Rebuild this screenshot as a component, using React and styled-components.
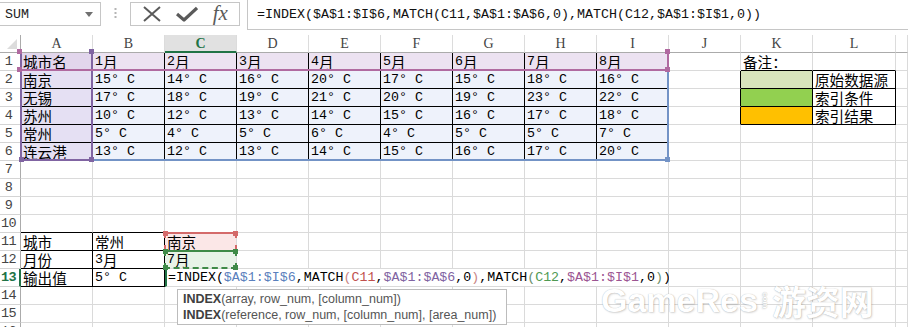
import React from 'react';
import styled, { createGlobalStyle, css } from 'styled-components';

const GlobalStyle = createGlobalStyle`
  html, body { margin: 0; padding: 0; background: #fff; }
  body {
    width: 908px;
    height: 327px;
    overflow: hidden;
    font-family: "Liberation Mono", "Noto Sans CJK SC", monospace;
  }
`;

const HEAD_W = 21;
const COL_W = 72;
const ROW_H = 18;
const LETTERS = ['A', 'B', 'C', 'D', 'E', 'F', 'G', 'H', 'I', 'J', 'K', 'L', ''];
const GRID = '#dadada';
const GREEN = '#217346';

const REF = {
  blue: '#5a80bd',
  red: '#c0504d',
  purple: '#8064a2',
  green: '#4f9a52',
  mauve: '#9c5592',
  paren1: '#c98585',
  paren2: '#6b8f6b',
};

// ---- data ----
const temps = {
  2: [15, 14, 16, 20, 17, 15, 18, 16],
  3: [17, 18, 19, 21, 20, 19, 23, 22],
  4: [10, 12, 13, 14, 15, 16, 17, 18],
  5: [5, 4, 5, 6, 4, 5, 5, 7],
  6: [13, 12, 13, 14, 15, 16, 17, 20],
};
const cities = { 2: '南京', 3: '无锡', 4: '苏州', 5: '常州', 6: '连云港' };

const content = {};
const put = (r, c, v) => { content[`${r}:${c}`] = v; };
put(1, 0, '城市名');
for (let m = 1; m <= 8; m++) put(1, m, `${m}月`);
put(1, 10, '备注：');
Object.keys(temps).forEach((r) => {
  put(r, 0, cities[r]);
  temps[r].forEach((t, i) => put(r, i + 1, `${t}° C`));
});
put(2, 11, '原始数据源');
put(3, 11, '索引条件');
put(4, 11, '索引结果');
put(11, 0, '城市'); put(11, 1, '常州'); put(11, 2, '南京');
put(12, 0, '月份'); put(12, 1, '3月'); put(12, 2, '7月');
put(13, 0, '输出值'); put(13, 1, '5° C');

const boxed = [
  { r1: 1, r2: 6, c1: 0, c2: 8 },
  { r1: 11, r2: 13, c1: 0, c2: 1 },
  { r1: 2, r2: 4, c1: 10, c2: 11 },
];
const inBox = (r, c) => boxed.some((b) => r >= b.r1 && r <= b.r2 && c >= b.c1 && c <= b.c2);

const fillOf = (r, c) => {
  if (r === 1 && c === 0) return '#e2d6ec';
  if (r === 1 && c <= 8) return '#ece2f1';
  if (r >= 2 && r <= 6 && c === 0) return '#e5e0f3';
  if (r >= 2 && r <= 6 && c <= 8) return '#eef2fb';
  if (c === 10 && r === 2) return '#d8e4bc';
  if (c === 10 && r === 3) return '#92d050';
  if (c === 10 && r === 4) return '#ffc000';
  if (r === 11 && c === 2) return '#fbe7e7';
  if (r === 12 && c === 2) return '#e8f3e8';
  return '#fff';
};

const formulaParts = [
  ['=INDEX(', null], ['$A$1:$I$6', REF.blue], [',MATCH', null], ['(', REF.paren1],
  ['C11', REF.red], [',', null], ['$A$1:$A$6', REF.purple], [',0', null], [')', REF.paren1],
  [',MATCH', null], ['(', REF.paren2], ['C12', REF.green], [',', null],
  ['$A$1:$I$1', REF.mauve], [',0', null], [')', REF.paren2], [')', null],
];
const formulaText = formulaParts.map((p) => p[0]).join('');

// ---- top bar ----
const Page = styled.div`
  position: relative;
  width: 908px;
  height: 327px;
  overflow: hidden;
  background: #fff;
`;

const TopBar = styled.div`
  display: flex;
  align-items: flex-start;
  height: 35px;
`;

const NameBox = styled.div`
  box-sizing: border-box;
  margin-top: 2px;
  width: 101px;
  height: 24px;
  border: 1px solid #c6c6c6;
  border-left: none;
  display: flex;
  align-items: center;
  justify-content: space-between;
  padding: 0 7px 0 5px;
  font-family: "Liberation Mono", monospace;
  font-size: 13.3px;
  color: #222;
`;

const Grip = styled.div`
  width: 29px;
  height: 26px;
  display: flex;
  align-items: center;
  justify-content: center;
`;

const ButtonGroup = styled.div`
  box-sizing: border-box;
  margin-top: 2px;
  width: 110px;
  height: 24px;
  border: 1px solid #c6c6c6;
  display: flex;
  align-items: center;
  justify-content: space-around;
  padding: 0 4px;
`;

const Fx = styled.span`
  font-family: "Liberation Serif", serif;
  font-style: italic;
  font-size: 21px;
  color: #5a5a5a;
  line-height: 1;
  margin-top: -2px;
`;

const FormulaBox = styled.div`
  box-sizing: border-box;
  margin-left: 7px;
  flex: 1;
  height: 30px;
  border-left: 1px solid #c6c6c6;
  border-bottom: 1px solid #c6c6c6;
  padding: 6px 0 0 9px;
  font-family: "Liberation Mono", monospace;
  font-size: 13.33px;
  line-height: 18px;
  color: #111;
  white-space: nowrap;
`;

// ---- sheet ----
const Sheet = styled.div`
  position: relative;
  display: grid;
  grid-template-columns: ${HEAD_W}px repeat(11, ${COL_W}px) 83px 1fr;
  grid-auto-rows: ${ROW_H}px;
`;

const Corner = styled.div`
  box-sizing: border-box;
  border-right: 1px solid #ababab;
  border-bottom: 1px solid #ababab;
  display: flex;
  align-items: flex-end;
  justify-content: flex-end;
  padding: 0 3px 3px 0;
`;

const ColHead = styled.div`
  box-sizing: border-box;
  border-right: 1px solid #dcdcdc;
  border-bottom: ${(p) => (p.$on ? `2px solid ${GREEN}` : '1px solid #ababab')};
  background: ${(p) => (p.$on ? '#e1e1e1' : '#fff')};
  color: ${(p) => (p.$on ? GREEN : '#444')};
  font-weight: ${(p) => (p.$on ? 'bold' : 'normal')};
  font-family: "Liberation Serif", serif;
  font-size: 14px;
  line-height: 17px;
  text-align: center;
`;

const RowHead = styled.div`
  box-sizing: border-box;
  border-right: ${(p) => (p.$on ? `2px solid ${GREEN}` : '1px solid #ababab')};
  border-bottom: 1px solid #d4d4d4;
  color: ${(p) => (p.$on ? GREEN : '#444')};
  font-weight: ${(p) => (p.$on ? 'bold' : 'normal')};
  font-family: "Liberation Mono", monospace;
  font-size: 13.5px;
  line-height: 18px;
  text-align: center;
  padding-right: ${(p) => (p.$on ? 2 : 3)}px;
  letter-spacing: -0.5px;
`;

const Cell = styled.div`
  box-sizing: border-box;
  display: flex;
  align-items: center;
  border-right: 1px solid ${(p) => p.$right};
  border-bottom: 1px solid ${(p) => p.$bottom};
  background: ${(p) => p.$bg};
  padding: 1px 0 0 2px;
  font-family: "Liberation Mono", "Noto Sans CJK SC", monospace;
  font-size: 13.3px;
  line-height: 16px;
  color: #000;
  white-space: pre;
  ${(p) => p.$span && css`grid-column: span ${p.$span};`}
  ${(p) => p.$active && css`
    border-left: 2px solid ${GREEN};
    padding-left: 1px;
  `}
`;

const Han = styled.span`
  font-family: "Noto Sans CJK SC", sans-serif;
  font-size: 14.6px;
  line-height: 16px;
`;

const Ref = styled.span`
  color: ${(p) => p.$color || '#000'};
`;

// range highlight drawn over the grid
const RangeBox = styled.div`
  position: absolute;
  box-sizing: border-box;
  pointer-events: none;
  ${(p) => p.$sides.includes('t') && css`border-top: 2px solid ${p.$color};`}
  ${(p) => p.$sides.includes('r') && css`border-right: 2px ${p.$dash ? 'dashed' : 'solid'} ${p.$color};`}
  ${(p) => p.$sides.includes('b') && css`border-bottom: 2px ${p.$dash ? 'dashed' : 'solid'} ${p.$color};`}
  ${(p) => p.$sides.includes('l') && css`border-left: 2px ${p.$dash ? 'dashed' : 'solid'} ${p.$color};`}
`;

const Handle = styled.span`
  position: absolute;
  width: 5px;
  height: 5px;
  background: ${(p) => p.$color};
  ${(p) => (p.$at.includes('t') ? 'top: -3px;' : 'bottom: -3px;')}
  ${(p) => (p.$at.includes('l') ? 'left: -3px;' : 'right: -3px;')}
`;

const Tooltip = styled.div`
  position: absolute;
  left: 177px;
  top: 289px;
  box-sizing: border-box;
  width: 330px;
  height: 36px;
  background: #fff;
  border: 1px solid #bcbcbc;
  padding: 2px 0 0 5px;
  font-family: "Liberation Sans", Arial, sans-serif;
  font-size: 12.5px;
  line-height: 15.5px;
  color: #555;
  b { color: #404040; }
`;

const Watermark = styled.div`
  position: absolute;
  left: 601px;
  top: 276px;
  display: flex;
  align-items: center;
  gap: 3px;
  font-family: "Liberation Sans", Arial, "Noto Sans CJK SC", sans-serif;
  font-weight: bold;
  font-size: 34px;
  color: #fff;
  text-shadow: 0 0 1px rgba(0, 0, 0, 0.3), 1px 1px 2px rgba(0, 0, 0, 0.15);
  pointer-events: none;
`;

const Com = styled.span`
  writing-mode: vertical-rl;
  font-size: 8px;
  line-height: 1;
`;

// ---- helpers ----
const HAN_RE = /([\u3000-\u303f\u4e00-\u9fff\uff00-\uffef]+)/;
const withHan = (text) =>
  text.split(HAN_RE).filter(Boolean).map((part, i) =>
    HAN_RE.test(part) ? <Han key={i}>{part}</Han> : <span key={i}>{part}</span>
  );

const boxStyle = (r1, r2, c1, c2) => ({
  left: HEAD_W + c1 * COL_W - 1,
  top: ROW_H + (r1 - 1) * ROW_H - 1,
  width: (c2 - c1 + 1) * COL_W + 1,
  height: (r2 - r1 + 1) * ROW_H + 1,
});

const ranges = [
  { key: 'all', r: [1, 6], c: [0, 8], color: '#7393c6', sides: 'rb', handles: ['br'] },
  { key: 'colA', r: [1, 6], c: [0, 0], color: REF.purple, sides: 'lrb', handles: ['tr', 'bl', 'br'] },
  { key: 'row1', r: [1, 1], c: [0, 8], color: '#b06aa0', sides: 'rb', handles: ['tl', 'tr', 'bl', 'br'] },
  { key: 'c11', r: [11, 11], c: [2, 2], color: '#d46a6a', sides: 'trl', dash: true, handles: ['tl', 'tr'] },
  { key: 'c12', r: [12, 12], c: [2, 2], color: '#3f8a48', sides: 'trbl', dash: true, handles: ['tl', 'tr', 'bl', 'br'] },
];

const CloseIcon = () => (
  <svg width="20" height="16" viewBox="0 0 20 16">
    <path d="M2 1 L18 15 M18 1 L2 15" stroke="#5a5a5a" strokeWidth="2" fill="none" />
  </svg>
);

const CheckIcon = () => (
  <svg width="22" height="16" viewBox="0 0 22 16">
    <path d="M1 8 L8 14 L21 2" stroke="#5a5a5a" strokeWidth="3.2" fill="none" strokeLinejoin="round" />
  </svg>
);

const GripDots = () => (
  <svg width="3" height="10" viewBox="0 0 3 10">
    <rect x="0.5" y="0" width="2" height="2" fill="#b5b5b5" />
    <rect x="0.5" y="4" width="2" height="2" fill="#b5b5b5" />
    <rect x="0.5" y="8" width="2" height="2" fill="#b5b5b5" />
  </svg>
);

const DropArrow = () => (
  <svg width="8" height="5" viewBox="0 0 8 5">
    <path d="M0 0 L8 0 L4 5 Z" fill="#707070" />
  </svg>
);

const CornerTriangle = () => (
  <svg width="10" height="10" viewBox="0 0 10 10">
    <path d="M10 0 L10 10 L0 10 Z" fill="#dcdcdc" />
  </svg>
);

function SheetRows() {
  const out = [];
  for (let r = 1; r <= 16; r++) {
    out.push(<RowHead key={`h${r}`} $on={r === 13}>{r}</RowHead>);
    for (let c = 0; c < 13; c++) {
      if (r === 13 && c >= 3 && c <= 8) continue;
      const right = inBox(r, c) || inBox(r, c + 1) ? '#000' : GRID;
      const bottom = inBox(r, c) || inBox(r + 1, c) ? '#000' : GRID;
      if (r === 13 && c === 2) {
        out.push(
          <Cell key={`${r}:${c}`} $right={GRID} $bottom={GRID} $bg="#fff" $span={7} $active>
            <span>
              {formulaParts.map(([t, color], i) => (
                <Ref key={i} $color={color}>{t}</Ref>
              ))}
            </span>
          </Cell>
        );
        continue;
      }
      const v = content[`${r}:${c}`];
      out.push(
        <Cell key={`${r}:${c}`} $right={right} $bottom={bottom} $bg={fillOf(r, c)}>
          {v ? withHan(v) : null}
        </Cell>
      );
    }
  }
  return out;
}

export default function App() {
  return (
    <Page>
      <GlobalStyle />
      <TopBar>
        <NameBox>
          <span>SUM</span>
          <DropArrow />
        </NameBox>
        <Grip><GripDots /></Grip>
        <ButtonGroup>
          <CloseIcon />
          <CheckIcon />
          <Fx>fx</Fx>
        </ButtonGroup>
        <FormulaBox>{formulaText}</FormulaBox>
      </TopBar>

      <Sheet>
        <Corner><CornerTriangle /></Corner>
        {LETTERS.map((l, i) => (
          <ColHead key={i} $on={l === 'C'}>{l}</ColHead>
        ))}
        <SheetRows />
        {ranges.map((g) => (
          <RangeBox
            key={g.key}
            $color={g.color}
            $sides={g.sides}
            $dash={g.dash}
            style={boxStyle(g.r[0], g.r[1], g.c[0], g.c[1])}
          >
            {g.handles.map((h) => (
              <Handle key={h} $at={h} $color={g.color} />
            ))}
          </RangeBox>
        ))}
      </Sheet>

      <Tooltip>
        <div><b>INDEX</b>(array, row_num, [column_num])</div>
        <div><b>INDEX</b>(reference, row_num, [column_num], [area_num])</div>
      </Tooltip>

      <Watermark>
        <span>GameRes</span>
        <Com>com</Com>
        <span>游资网</span>
      </Watermark>
    </Page>
  );
}
